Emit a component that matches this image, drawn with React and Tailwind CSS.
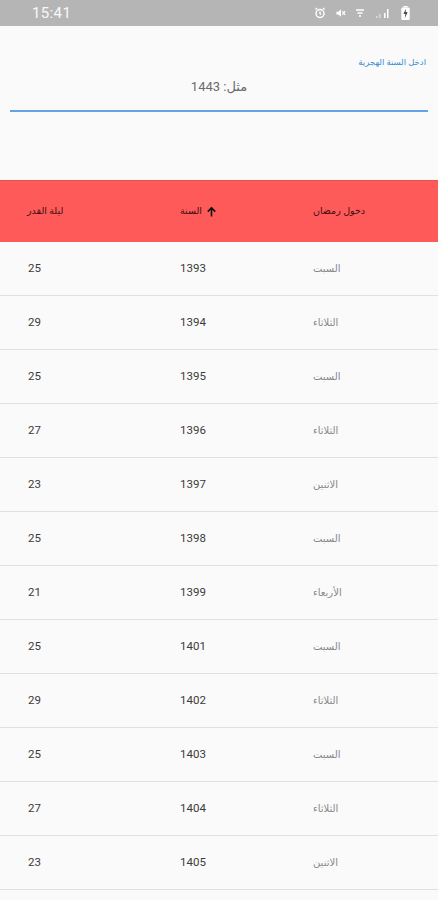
import React from 'react';

const rows = [
    ['25', '1393', 'السبت'],
    ['29', '1394', 'الثلاثاء'],
    ['25', '1395', 'السبت'],
    ['27', '1396', 'الثلاثاء'],
    ['23', '1397', 'الاثنين'],
    ['25', '1398', 'السبت'],
    ['21', '1399', 'الأربعاء'],
    ['25', '1401', 'السبت'],
    ['29', '1402', 'الثلاثاء'],
    ['25', '1403', 'السبت'],
    ['27', '1404', 'الثلاثاء'],
    ['23', '1405', 'الاثنين'],
];

const StatusBar = () => (
    <div className="h-[26px] bg-[#b5b5b5] flex items-center justify-between pl-[32px] pr-[28px] text-white/90">
        <span className="text-[15px] tracking-wide">15:41</span>
        <div className="flex items-center gap-[9px]">
            {/* alarm */}
            <svg width="12" height="12" viewBox="0 0 24 24" fill="none" stroke="white" strokeWidth="3">
                <circle cx="12" cy="13" r="8" />
                <path d="M12 9v4l2 2M3 5l3-3M21 5l-3-3" />
            </svg>
            {/* mute */}
            <svg width="11" height="12" viewBox="0 0 24 24" fill="white">
                <path d="M3 9h4l6-5v16l-6-5H3z" />
                <path d="M16 8l6 8M22 8l-6 8" stroke="white" strokeWidth="2.5" />
            </svg>
            {/* data */}
            <svg width="10" height="12" viewBox="0 0 20 24" fill="none" stroke="white" strokeWidth="3">
                <path d="M2 6h16M5 12h10M8 18h4" />
            </svg>
            {/* signal */}
            <svg width="18" height="12" viewBox="0 0 32 24" fill="white">
                <path d="M2 22h3v-4H2zM8 22h3v-8H8z" opacity="0.5" />
                <path d="M18 22h3v-10h-3zM24 22h3V4h-3z" />
            </svg>
            {/* battery */}
            <svg width="9" height="14" viewBox="0 0 12 20">
                <rect x="3" y="0" width="6" height="2" fill="white" />
                <rect x="0" y="2" width="12" height="18" rx="1.5" fill="white" />
                <path d="M7 4L3 11h3l-1 6 4-8H6z" fill="#333" />
            </svg>
        </div>
    </div>
);

export default function App() {
    return (
        <div className="w-[438px] h-[900px] overflow-hidden bg-[#fafafa]" style={{ fontFamily: 'Roboto, "DejaVu Sans", sans-serif' }}>
            <StatusBar />

            {/* input */}
            <div className="px-[10px] pt-[32px] h-[154px]">
                <div dir="rtl" className="text-[8.5px] text-[#3a8fd6] leading-none pr-[2px]">ادخل السنة الهجرية</div>
                <div className="mt-[13px] text-center text-[13px] text-[#6b6b6b] leading-none" dir="rtl">مثل: 1443</div>
                <div className="mt-[17px] h-[2px] bg-[#64a3e4]" />
            </div>

            {/* header */}
            <div className="h-[62px] bg-[#ff5a5a] border-t border-[#e85050] flex items-center text-[9.5px] text-[#3a0d0d]">
                <div className="w-[152px] pl-[27px]"><span dir="rtl">ليلة القدر</span></div>
                <div className="w-[133px] pl-[28px] flex items-center gap-[4px]">
                    <span dir="rtl">السنة</span>
                    <svg width="11" height="11" viewBox="0 0 24 24" fill="none" stroke="#111" strokeWidth="3.5" strokeLinecap="square">
                        <path d="M12 21V4M5 11l7-7 7 7" />
                    </svg>
                </div>
                <div className="flex-1 pl-[28px]"><span dir="rtl">دخول رمضان</span></div>
            </div>

            {/* rows */}
            {rows.map(([night, year, day], i) => (
                <div key={i} className="h-[54px] flex items-center border-b border-[#e0e0e0]">
                    <div className="w-[152px] pl-[28px] text-[11.5px] text-[#3a3a3a]">{night}</div>
                    <div className="w-[133px] pl-[28px] text-[11.5px] text-[#3a3a3a]">{year}</div>
                    <div className="flex-1 pl-[28px] text-[10px] text-[#888]"><span dir="rtl">{day}</span></div>
                </div>
            ))}
        </div>
    );
}
